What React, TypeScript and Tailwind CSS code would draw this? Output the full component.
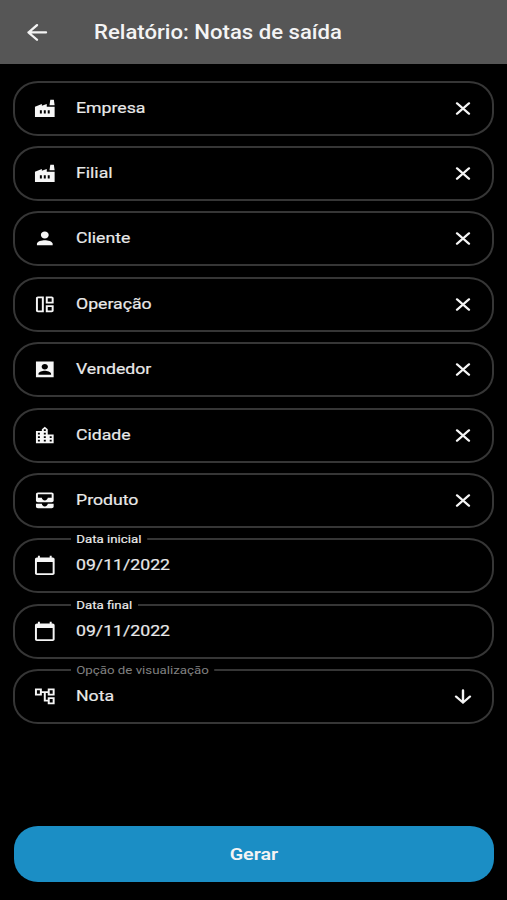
import React from "react";

type IconProps = { d: string };

function Icon({ d }: IconProps) {
  return (
    <svg viewBox="0 0 24 24" preserveAspectRatio="none" className="h-[20.8px] w-[23.6px] shrink-0 fill-[#f6f6f6]">
      <path fillRule="evenodd" d={d} />
    </svg>
  );
}

const paths = {
  factory:
    "M22 10v12H2V10l7-3v2l5-2v3h8zM16.8 8.5 17.6 2h3.6l.8 6.5h-5.2zM11 18h2v-4h-2v4zm-4 0h2v-4H7v4zm10-4h-2v4h2v-4z",
  person:
    "M12 12c2.21 0 4-1.79 4-4s-1.79-4-4-4-4 1.79-4 4 1.79 4 4 4zm0 2c-2.67 0-8 1.34-8 4v2h16v-2c0-2.66-5.33-4-8-4z",
  mosaic:
    "M3 5v14c0 1.1.89 2 2 2h6V3H5c-1.11 0-2 .9-2 2zm2 14V5h4v14H5zM19 3h-6v8h8V5c0-1.1-.9-2-2-2zm0 6h-4V5h4v4zM13 21h6c1.1 0 2-.9 2-2v-6h-8v8zm2-6h4v4h-4v-4z",
  account:
    "M3 3h18v18H3V3zM15.2 9c0-1.76-1.44-3.2-3.2-3.2S8.8 7.24 8.8 9s1.44 3.2 3.2 3.2 3.2-1.44 3.2-3.2zM5.6 17v1.2h12.8V17c0-2.1-4.2-3.3-6.4-3.3S5.6 14.9 5.6 17z",
  city:
    "M15 11V5l-3-3-3 3v2H3v14h18V11h-6zm-8 8H5v-2h2v2zm0-4H5v-2h2v2zm0-4H5V9h2v2zm6 8h-2v-2h2v2zm0-4h-2v-2h2v2zm0-4h-2V9h2v2zm0-4h-2V5h2v2zm6 12h-2v-2h2v2zm0-4h-2v-2h2v2z",
  inbox:
    "M19 3H5c-1.1 0-2 .9-2 2v7c0 1.1.9 2 2 2h14c1.1 0 2-.9 2-2V5c0-1.1-.9-2-2-2zm0 6h-4c0 1.62-1.38 3-3 3s-3-1.38-3-3H5V5h14v4zm-4 7h6v3c0 1.1-.9 2-2 2H5c-1.1 0-2-.9-2-2v-3h6c0 1.66 1.34 3 3 3s3-1.34 3-3z",
  calendar:
    "M20 3h-1V1h-2v2H7V1H5v2H4c-1.1 0-2 .9-2 2v16c0 1.1.9 2 2 2h16c1.1 0 2-.9 2-2V5c0-1.1-.9-2-2-2zm0 18H4V8h16v13z",
  tree:
    "M22 11V3h-7v3H9V3H2v8h7V8h2v10h4v3h7v-8h-7v3h-2V8h2v3h7zM7 9H4V5h3v4zm10 6h3v4h-3v-4zm0-10h3v4h-3V5z",
};

type Field = {
  icon: keyof typeof paths;
  text: string;
  label?: string;
  muted?: boolean;
  action?: "clear" | "open";
};

const fields: Field[] = [
  { icon: "factory", text: "Empresa", action: "clear" },
  { icon: "factory", text: "Filial", action: "clear" },
  { icon: "person", text: "Cliente", action: "clear" },
  { icon: "mosaic", text: "Operação", action: "clear" },
  { icon: "account", text: "Vendedor", action: "clear" },
  { icon: "city", text: "Cidade", action: "clear" },
  { icon: "inbox", text: "Produto", action: "clear" },
  { icon: "calendar", text: "09/11/2022", label: "Data inicial" },
  { icon: "calendar", text: "09/11/2022", label: "Data final" },
  { icon: "tree", text: "Nota", label: "Opção de visualização", muted: true, action: "open" },
];

function FieldRow({ icon, text, label, muted, action }: Field) {
  return (
    <div className="relative flex h-[55px] items-center rounded-[25px/23px] border-2 border-[#363636] pr-[17px] pl-[17.5px]">
      {label && (
        <span
          className={`absolute -top-[8px] left-[56px] origin-left scale-x-[1.155] bg-black pr-[5px] pl-[4.5px] text-[11.5px] leading-[14px] whitespace-nowrap ${
            muted ? "text-[#808080]" : "text-[#eeeeee] [-webkit-text-stroke:0.15px]"
          }`}
        >
          {label}
        </span>
      )}
      <Icon d={paths[icon]} />
      <div className="ml-[19.5px] flex flex-1">
        <span className="origin-left scale-x-[1.155] pb-[1px] text-[15.3px] leading-5 text-[#e9e9e9] [-webkit-text-stroke:0.2px]">
          {text}
        </span>
      </div>
      {action && (
        <svg viewBox="0 0 24 24" preserveAspectRatio="none" className="h-[21px] w-[24px] shrink-0 fill-none stroke-[#f4f4f4] stroke-[2.4]">
          <path
            strokeLinecap="round"
            strokeLinejoin="round"
            d={action === "clear" ? "M6 6l12 12M18 6L6 18" : "M12 5v14M5 12l7 7 7-7"}
          />
        </svg>
      )}
    </div>
  );
}

export default function App() {
  return (
    <div className="flex h-[900px] w-[507px] flex-col bg-black font-[Roboto,sans-serif]">
      <header className="flex h-[64px] shrink-0 items-center bg-[#565656] pl-[25px]">
        <svg viewBox="0 0 24 24" preserveAspectRatio="none" className="h-[22px] w-[24px] fill-none stroke-[#f4f4f4] stroke-[2.4]">
          <path strokeLinecap="round" strokeLinejoin="round" d="M21 12.5H3.5M12 4.5l-8.5 8 8.5 8" />
        </svg>
        <h1 className="ml-[45px] origin-left scale-x-[1.134] pt-[2px] text-[19.5px] font-medium whitespace-nowrap text-[#f4f4f4]">
          Relatório: Notas de saída
        </h1>
      </header>
      <main className="flex flex-1 flex-col gap-[10.4px] px-[13px] pt-[16.6px]">
        {fields.map((field, i) => (
          <FieldRow key={i} {...field} />
        ))}
      </main>
      <footer className="px-[13.5px] pb-[18px]">
        <button className="flex h-[56px] w-full items-center justify-center rounded-[24px/23px] bg-[#1b8ec5] text-[#f4f4f4]">
          <span className="scale-x-[1.16] pt-[1px] text-[17px] font-semibold">Gerar</span>
        </button>
      </footer>
    </div>
  );
}
